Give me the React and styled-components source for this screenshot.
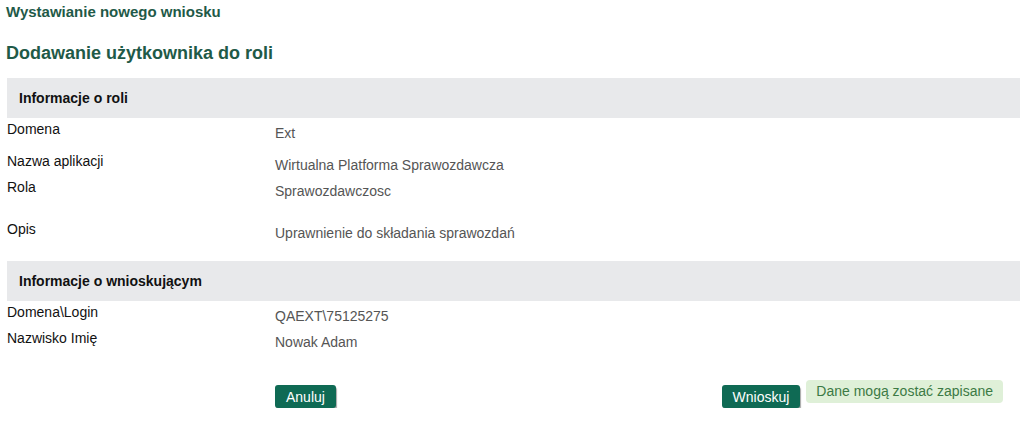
import React from "react";
import styled, { createGlobalStyle } from "styled-components";

const Global = createGlobalStyle`
  html, body { margin: 0; padding: 0; background: #fff; }
  body { font-family: "Liberation Sans", Arial, sans-serif; }
`;

const Page = styled.div`
  padding: 4px 1px 0 7px;
  width: 1021px;
  box-sizing: border-box;
`;

const Title = styled.div`
  font-size: 15px;
  line-height: 16px;
  font-weight: bold;
  color: #1f5a48;
  margin-left: -1px;
`;

const Heading = styled.h2`
  margin: 22px 0 14px -1px;
  font-size: 18px;
  line-height: 22px;
  font-weight: bold;
  color: #1f5a48;
`;

const Band = styled.div`
  background: #e8e9eb;
  height: 40px;
  display: flex;
  align-items: center;
  padding-left: 12px;
  font-size: 14px;
  font-weight: bold;
  color: #111;
`;

const Row = styled.div`
  display: grid;
  grid-template-columns: 268px 1fr;
  height: ${(p) => p.$h}px;
  font-size: 14px;
  line-height: 16px;
`;

const Label = styled.div`
  padding-top: 3px;
  color: #111;
`;

const Value = styled.div`
  padding-top: 7px;
  color: #555;
`;

const Actions = styled.div`
  display: grid;
  grid-template-columns: 268px 1fr auto;
  margin-top: 27px;
`;

const Right = styled.div`
  display: flex;
  justify-content: flex-end;
  align-items: flex-start;
  gap: 6px;
  padding-right: 17px;
`;

const Left = styled.div`
  display: flex;
  align-items: flex-start;
`;

const Button = styled.button`
  margin-top: 5px;
  height: 23px;
  padding: 0 11px;
  border: none;
  border-radius: 3px;
  background: #0f6a54;
  color: #fff;
  font-family: "Liberation Sans", Arial, sans-serif;
  font-size: 14px;
  box-shadow: 1px 2px 1px rgba(0, 0, 0, 0.35);
  cursor: pointer;
`;

const Status = styled.div`
  height: 23px;
  padding: 0 10px;
  border-radius: 4px;
  background: #dff0d8;
  color: #3c7a45;
  font-size: 14px;
  line-height: 22px;
`;

const roleRows = [
  ["Domena", "Ext", 32],
  ["Nazwa aplikacji", "Wirtualna Platforma Sprawozdawcza", 26],
  ["Rola", "Sprawozdawczosc", 42],
  ["Opis", "Uprawnienie do składania sprawozdań", 43],
];

const userRows = [
  ["Domena\\Login", "QAEXT\\75125275", 26],
  ["Nazwisko Imię", "Nowak Adam", 26],
];

export default function App() {
  return (
    <Page>
      <Global />
      <Title>Wystawianie nowego wniosku</Title>
      <Heading>Dodawanie użytkownika do roli</Heading>
      <Band>Informacje o roli</Band>
      {roleRows.map(([l, v, h]) => (
        <Row key={l} $h={h}>
          <Label>{l}</Label>
          <Value>{v}</Value>
        </Row>
      ))}
      <Band>Informacje o wnioskującym</Band>
      {userRows.map(([l, v, h]) => (
        <Row key={l} $h={h}>
          <Label>{l}</Label>
          <Value>{v}</Value>
        </Row>
      ))}
      <Actions>
        <div />
        <Left>
          <Button>Anuluj</Button>
        </Left>
        <Right>
          <Button>Wnioskuj</Button>
          <Status>Dane mogą zostać zapisane</Status>
        </Right>
      </Actions>
    </Page>
  );
}
